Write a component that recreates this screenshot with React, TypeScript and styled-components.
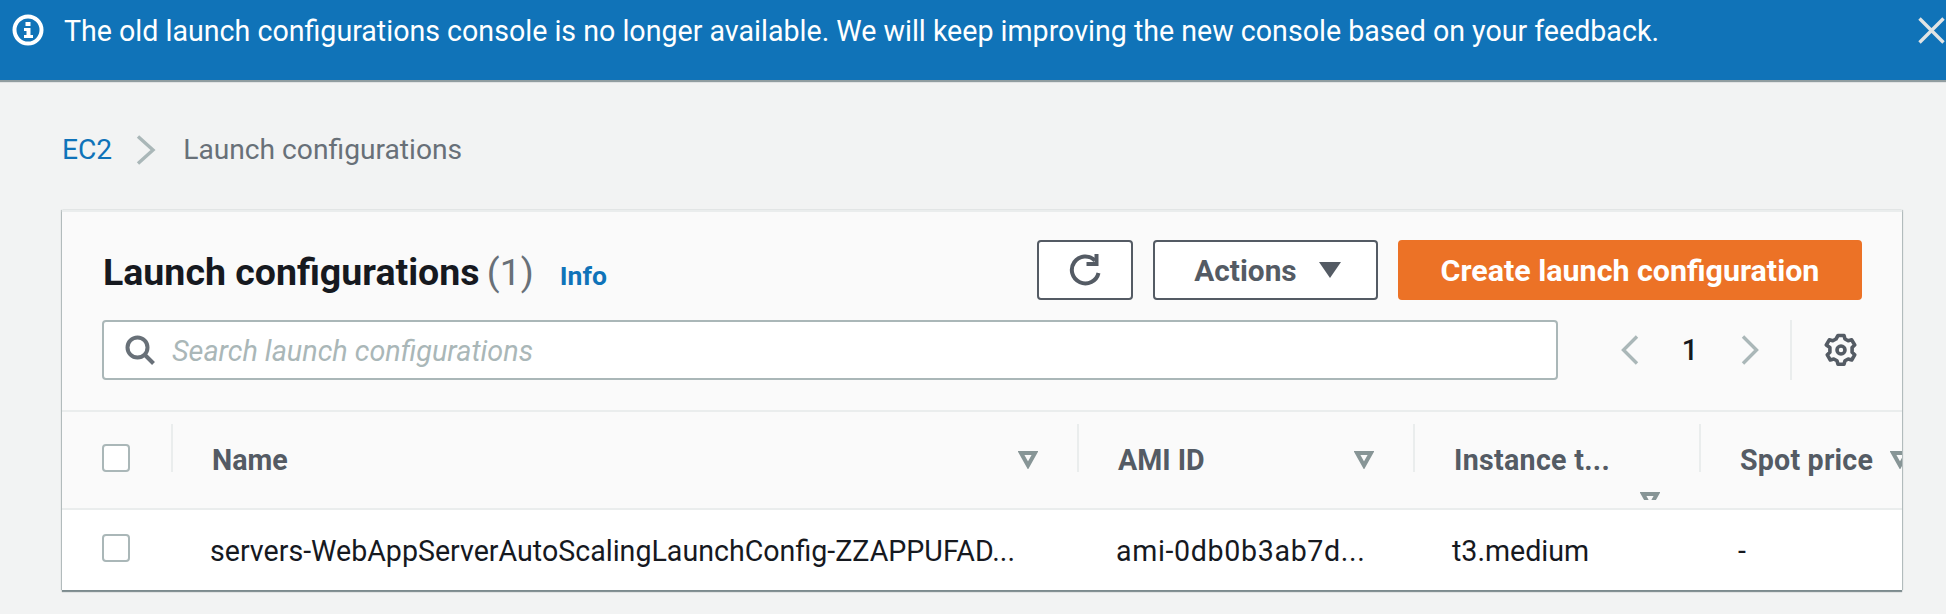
import React from 'react';
import styled, { createGlobalStyle } from 'styled-components';

const GlobalStyle = createGlobalStyle`
  html, body {
    margin: 0;
    padding: 0;
    background: #f2f3f3;
    overflow: hidden;
  }
  * {
    box-sizing: border-box;
  }
  body {
    font-family: Roboto, "Liberation Sans", Arial, sans-serif;
    font-size: 28.6px;
    color: #16191f;
  }
`;

const COLUMNS = '109px 906px 336px 286px 1fr';

const Page = styled.div`
  width: 1946px;
  height: 614px;
  overflow: hidden;
`;

const Banner = styled.div`
  height: 80px;
  background: #1073b8;
  box-shadow: 0 2px 1px rgba(0, 28, 36, 0.4);
  color: #fff;
  display: flex;
  align-items: center;
  padding: 0 1px 0 12px;
  position: relative;
`;

const BannerText = styled.span`
  flex: 1;
  margin-left: 20px;
  line-height: 40px;
  margin-top: -18px;
  white-space: nowrap;
`;

const BannerIcon = styled.svg`
  width: 32px;
  height: 32px;
  margin-top: -20px;
`;

const CloseIcon = styled.svg`
  width: 27px;
  height: 27px;
  margin-top: -20px;
`;

const Breadcrumb = styled.nav`
  display: flex;
  align-items: center;
  padding: 50px 0 40px 62px;
  font-size: 28.2px;
  line-height: 40px;
`;

const CrumbLink = styled.a`
  color: #0f73b9;
`;

const CrumbCurrent = styled.span`
  color: #687078;
`;

const CrumbChevron = styled.svg`
  width: 20px;
  height: 30px;
  margin: 0 27px 0 24px;
`;

const Card = styled.section`
  width: 1840px;
  margin-left: 62px;
  border-top: 2px solid #eaeded;
  background: #fafafa;
  box-shadow: 0 2px 1px rgba(0, 28, 36, 0.45), 1px 0 1px rgba(0, 28, 36, 0.2), -1px 0 1px rgba(0, 28, 36, 0.2);
  overflow: hidden;
`;

const CardHeader = styled.header`
  padding: 28px 40px 30px 40px;
  border-bottom: 2px solid #eaeded;
`;

const TitleRow = styled.div`
  display: flex;
  align-items: center;
  height: 60px;
`;

const Title = styled.h1`
  margin: 4px 0 0 1px;
  font-size: 37.5px;
  font-weight: 700;
  line-height: 46px;
  color: #16191f;
`;

const Count = styled.span`
  color: #687078;
  font-weight: 400;
  margin-left: -2px;
`;

const InfoLink = styled.a`
  margin: 10px auto 0 26px;
  font-size: 26.5px;
  font-weight: 700;
  color: #0f73b9;
`;

const Button = styled.button<{ $primary?: boolean; $width: number }>`
  display: flex;
  align-items: center;
  justify-content: center;
  width: ${(p) => p.$width}px;
  height: 60px;
  margin-left: 20px;
  padding: 0;
  border-radius: 4px;
  border: 2px solid ${(p) => (p.$primary ? '#ec7226' : '#545b64')};
  background: ${(p) => (p.$primary ? '#ec7226' : '#fff')};
  color: ${(p) => (p.$primary ? '#fff' : '#545b64')};
  font-family: inherit;
  font-size: ${(p) => (p.$primary ? 30.4 : 29.8)}px;
  font-weight: 700;
`;

const ActionsButton = styled(Button)`
  padding-left: 4px;
`;

const Caret = styled.svg`
  width: 22px;
  height: 16px;
  margin-left: 22px;
`;

const RefreshIcon = styled.svg`
  width: 34px;
  height: 34px;
`;

const SearchRow = styled.div`
  display: flex;
  align-items: center;
  margin-top: 20px;
  height: 60px;
`;

const SearchBox = styled.label`
  display: flex;
  align-items: center;
  width: 1456px;
  height: 60px;
  padding-left: 21px;
  background: #fff;
  border: 2px solid #aab7b8;
  border-radius: 4px;
`;

const SearchIcon = styled.svg`
  width: 30px;
  height: 30px;
  flex: none;
`;

const SearchInput = styled.input`
  flex: 1;
  margin: 2px 0 0 17px;
  border: 0;
  outline: 0;
  padding: 0;
  background: transparent;
  font-family: inherit;
  font-size: 28.8px;
  font-style: italic;
  &::placeholder {
    color: #aab7b8;
    opacity: 1;
  }
`;

const Pager = styled.div`
  display: flex;
  align-items: center;
  height: 60px;
  margin-left: 63px;
`;

const PagerChevron = styled.svg`
  width: 18px;
  height: 30px;
`;

const PageNumber = styled.span`
  width: 102px;
  text-align: center;
  font-weight: 500;
`;

const PagerDivider = styled.div`
  width: 2px;
  height: 60px;
  margin: 0 32px 0 31px;
  background: #eaeded;
`;

const GearIcon = styled.svg`
  width: 34px;
  height: 34px;
`;

const HeaderRow = styled.div`
  display: grid;
  grid-template-columns: ${COLUMNS};
  height: 98px;
  padding-top: 12px;
  border-bottom: 2px solid #eaeded;
`;

const BodyRow = styled.div`
  display: grid;
  grid-template-columns: ${COLUMNS};
  height: 80px;
  background: #fff;
`;

const CheckCell = styled.div`
  padding: 20px 0 0 40px;
`;

const Checkbox = styled.span`
  display: block;
  width: 28px;
  height: 28px;
  background: #fff;
  border: 2px solid #aab7b8;
  border-radius: 4px;
`;

const HeaderCell = styled.div<{ $wrap?: boolean }>`
  position: relative;
  display: flex;
  flex-wrap: ${(p) => (p.$wrap ? 'wrap' : 'nowrap')};
  justify-content: space-between;
  align-content: flex-start;
  height: 76px;
  padding: 16px 39px 0 41px;
  overflow: hidden;
  font-weight: 700;
  line-height: 40px;
  color: #545b64;
  white-space: nowrap;
  &::before {
    content: '';
    position: absolute;
    left: 0;
    top: 0;
    width: 2px;
    height: 48px;
    background: #eaeded;
  }
`;

const SpotCell = styled(HeaderCell)`
  justify-content: flex-start;
  padding-right: 0;
  letter-spacing: 0.2px;
`;

const WrappedLabel = styled.span`
  flex: 0 0 100%;
  letter-spacing: 0.3px;
`;

const SortIcon = styled.svg<{ $below?: boolean; $gap?: number }>`
  flex: none;
  width: 20px;
  height: 18px;
  margin-top: ${(p) => (p.$below ? 12 : 11)}px;
  margin-left: ${(p) => (p.$below ? 'auto' : `${p.$gap ?? 0}px`)};
`;

const BodyCell = styled.div<{ $tracking?: number }>`
  padding: 21px 0 0 39px;
  line-height: 40px;
  color: #16191f;
  white-space: nowrap;
  overflow: hidden;
  letter-spacing: ${(p) => p.$tracking ?? 0}px;
`;

const RowCheckCell = styled(CheckCell)`
  padding-top: 24px;
`;

function Sort({ below, gap }: { below?: boolean; gap?: number }) {
  return (
    <SortIcon viewBox="0 0 20 18" $below={below} $gap={gap}>
      <path d="M3 2h14L10 14.5z" fill="none" stroke="#879596" strokeWidth="4" strokeLinejoin="miter" />
    </SortIcon>
  );
}

export default function App() {
  return (
    <Page>
      <GlobalStyle />
      <Banner>
        <BannerIcon viewBox="0 0 32 32">
          <circle cx="16" cy="16" r="13.5" fill="none" stroke="#fff" strokeWidth="4" />
          <rect x="13.5" y="8" width="5" height="4" fill="#fff" />
          <path d="M12 14h6.5v7H21v3H12v-3h2.5v-4H12z" fill="#fff" />
        </BannerIcon>
        <BannerText>
          The old launch configurations console is no longer available. We will keep improving the new console based on your feedback.
        </BannerText>
        <CloseIcon viewBox="0 0 27 27">
          <path d="M1.5 1.5l24 24M25.5 1.5l-24 24" stroke="#e1e4e4" strokeWidth="3.4" fill="none" />
        </CloseIcon>
      </Banner>

      <Breadcrumb>
        <CrumbLink>EC2</CrumbLink>
        <CrumbChevron viewBox="0 0 20 30">
          <path d="M2 1.5L17 15 2 28.5" fill="none" stroke="#aab7b8" strokeWidth="3.4" />
        </CrumbChevron>
        <CrumbCurrent>Launch configurations</CrumbCurrent>
      </Breadcrumb>

      <Card>
        <CardHeader>
          <TitleRow>
            <Title>
              Launch configurations <Count>(1)</Count>
            </Title>
            <InfoLink>Info</InfoLink>
            <Button $width={96}>
              <RefreshIcon viewBox="0 0 34 34">
                <path d="M27 7.5A13.5 13.5 0 1 0 30.5 20" fill="none" stroke="#545b64" strokeWidth="4" />
                <path d="M28.5 1v10H18.5" fill="none" stroke="#545b64" strokeWidth="4" />
              </RefreshIcon>
            </Button>
            <ActionsButton $width={225}>
              Actions
              <Caret viewBox="0 0 22 16">
                <path d="M0 0h22L11 16z" fill="#545b64" />
              </Caret>
            </ActionsButton>
            <Button $width={464} $primary>
              Create launch configuration
            </Button>
          </TitleRow>
          <SearchRow>
            <SearchBox>
              <SearchIcon viewBox="0 0 30 30">
                <circle cx="12.5" cy="12.5" r="10" fill="none" stroke="#687078" strokeWidth="4" />
                <path d="M19.5 19.5L28.5 28.5" stroke="#687078" strokeWidth="4" fill="none" />
              </SearchIcon>
              <SearchInput placeholder="Search launch configurations" readOnly />
            </SearchBox>
            <Pager>
              <PagerChevron viewBox="0 0 18 30">
                <path d="M16 1.5L2.5 15 16 28.5" fill="none" stroke="#aab7b8" strokeWidth="3.4" />
              </PagerChevron>
              <PageNumber>1</PageNumber>
              <PagerChevron viewBox="0 0 18 30">
                <path d="M2 1.5L15.5 15 2 28.5" fill="none" stroke="#aab7b8" strokeWidth="3.4" />
              </PagerChevron>
              <PagerDivider />
              <GearIcon viewBox="0 0 34 34">
                <path
                  d="M14 2.5h6l1 3.5 3.2 1.8 3.5-1 3 5.2-2.6 2.5v4.8l2.6 2.5-3 5.2-3.5-1-3.2 1.8-1 3.5h-6l-1-3.5-3.2-1.8-3.5 1-3-5.2 2.6-2.5v-4.8L2.3 12l3-5.2 3.5 1L12 6z"
                  fill="none"
                  stroke="#545b64"
                  strokeWidth="3.6"
                  strokeLinejoin="round"
                />
                <circle cx="17" cy="17" r="4" fill="none" stroke="#545b64" strokeWidth="3.6" />
              </GearIcon>
            </Pager>
          </SearchRow>
        </CardHeader>

        <HeaderRow>
          <CheckCell>
            <Checkbox />
          </CheckCell>
          <HeaderCell>
            Name
            <Sort />
          </HeaderCell>
          <HeaderCell>
            AMI ID
            <Sort />
          </HeaderCell>
          <HeaderCell $wrap>
            <WrappedLabel>Instance t...</WrappedLabel>
            <Sort below />
          </HeaderCell>
          <SpotCell>
            Spot price
            <Sort gap={17} />
          </SpotCell>
        </HeaderRow>

        <BodyRow>
          <RowCheckCell>
            <Checkbox />
          </RowCheckCell>
          <BodyCell>servers-WebAppServerAutoScalingLaunchConfig-ZZAPPUFAD...</BodyCell>
          <BodyCell $tracking={0.65}>ami-0db0b3ab7d...</BodyCell>
          <BodyCell>t3.medium</BodyCell>
          <BodyCell>-</BodyCell>
        </BodyRow>
      </Card>
    </Page>
  );
}
